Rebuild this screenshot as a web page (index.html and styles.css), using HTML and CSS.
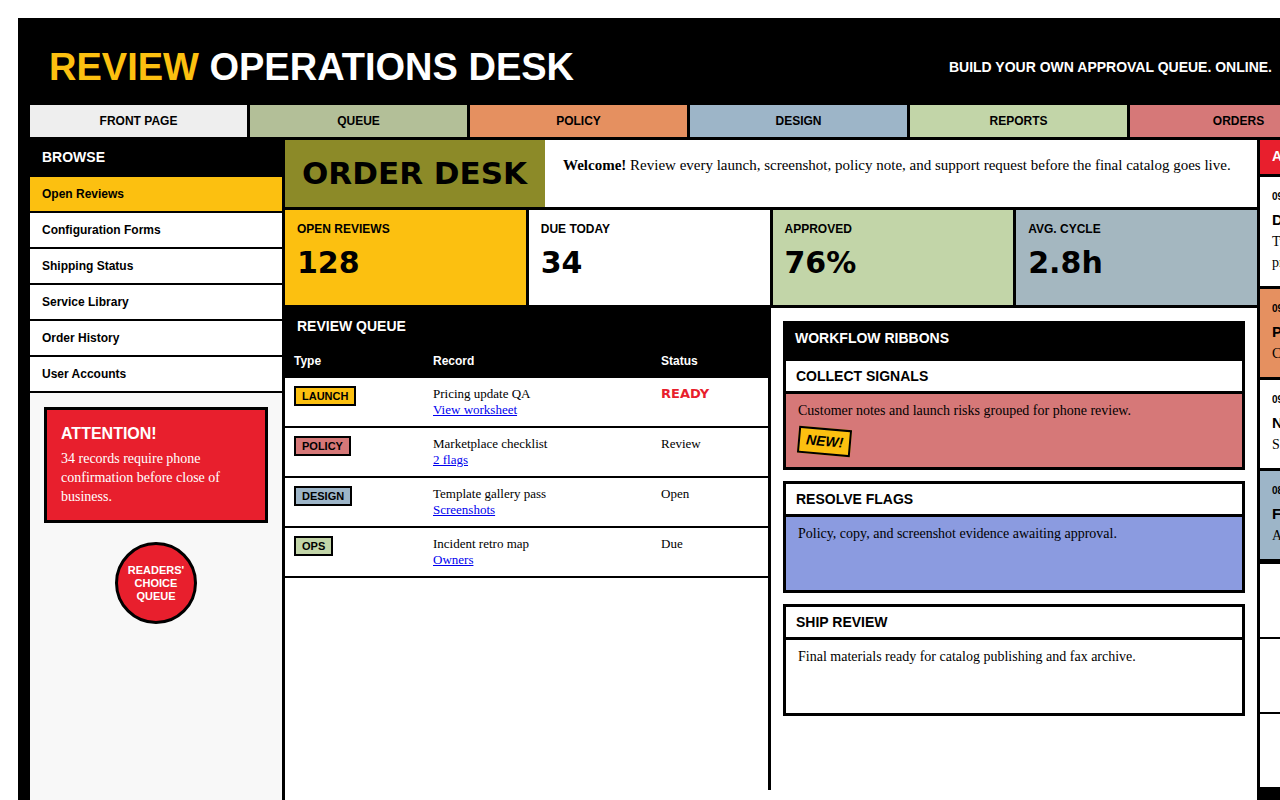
FILE: index.html
```html
<!DOCTYPE html>
<html lang="en">
<head>
    <meta charset="UTF-8">
    <meta name="viewport" content="width=device-width, initial-scale=1.0">
    <title>Review Operations Desk</title>
    <link rel="stylesheet" href="styles.css">
</head>
<body>

<div class="page">
    <header class="masthead">
        <h1 class="title"><span class="title-accent">REVIEW</span> OPERATIONS DESK</h1>
        <p class="tagline">BUILD YOUR OWN APPROVAL QUEUE. ONLINE.</p>
    </header>

    <nav class="tabs">
        <a href="#" class="tab tab-front">FRONT PAGE</a>
        <a href="#" class="tab tab-queue">QUEUE</a>
        <a href="#" class="tab tab-policy">POLICY</a>
        <a href="#" class="tab tab-design">DESIGN</a>
        <a href="#" class="tab tab-reports">REPORTS</a>
        <a href="#" class="tab tab-orders">ORDERS</a>
    </nav>

    <div class="layout">
        <aside class="sidebar">
            <h2 class="sidebar-title">BROWSE</h2>
            <ul class="browse-list">
                <li><a href="#" class="active">Open Reviews</a></li>
                <li><a href="#">Configuration Forms</a></li>
                <li><a href="#">Shipping Status</a></li>
                <li><a href="#">Service Library</a></li>
                <li><a href="#">Order History</a></li>
                <li><a href="#">User Accounts</a></li>
            </ul>
            <div class="sidebar-extra">
                <div class="attention">
                    <h3>ATTENTION!</h3>
                    <p>34 records require phone confirmation before close of business.</p>
                </div>
                <div class="badge">READERS'<br>CHOICE<br>QUEUE</div>
            </div>
        </aside>

        <main class="desk">
            <div class="desk-head">
                <h2 class="desk-title">ORDER DESK</h2>
                <p class="welcome"><strong>Welcome!</strong> Review every launch, screenshot, policy note, and support request before the final catalog goes live.</p>
            </div>

            <div class="stats">
                <div class="stat stat-yellow">
                    <div class="stat-label">OPEN REVIEWS</div>
                    <div class="stat-value">128</div>
                </div>
                <div class="stat">
                    <div class="stat-label">DUE TODAY</div>
                    <div class="stat-value">34</div>
                </div>
                <div class="stat stat-green">
                    <div class="stat-label">APPROVED</div>
                    <div class="stat-value">76%</div>
                </div>
                <div class="stat stat-slate">
                    <div class="stat-label">AVG. CYCLE</div>
                    <div class="stat-value">2.8h</div>
                </div>
            </div>

            <div class="lower">
                <section class="queue">
                    <h2 class="queue-title">REVIEW QUEUE</h2>
                    <table class="queue-table">
                        <colgroup>
                            <col class="col-type">
                            <col class="col-record">
                            <col class="col-status">
                        </colgroup>
                        <thead>
                            <tr>
                                <th>Type</th>
                                <th>Record</th>
                                <th>Status</th>
                            </tr>
                        </thead>
                        <tbody>
                            <tr>
                                <td><span class="tag tag-launch">LAUNCH</span></td>
                                <td>Pricing update QA<br><a href="#">View worksheet</a></td>
                                <td><span class="ready">READY</span></td>
                            </tr>
                            <tr>
                                <td><span class="tag tag-policy">POLICY</span></td>
                                <td>Marketplace checklist<br><a href="#">2 flags</a></td>
                                <td>Review</td>
                            </tr>
                            <tr>
                                <td><span class="tag tag-design">DESIGN</span></td>
                                <td>Template gallery pass<br><a href="#">Screenshots</a></td>
                                <td>Open</td>
                            </tr>
                            <tr>
                                <td><span class="tag tag-ops">OPS</span></td>
                                <td>Incident retro map<br><a href="#">Owners</a></td>
                                <td>Due</td>
                            </tr>
                        </tbody>
                    </table>
                </section>

                <section class="workflow">
                    <h2 class="workflow-title">WORKFLOW RIBBONS</h2>
                    <div class="ribbon">
                        <h3 class="ribbon-title">COLLECT SIGNALS</h3>
                        <div class="ribbon-body ribbon-pink">
                            <p>Customer notes and launch risks grouped for phone review.</p>
                            <span class="sticker">NEW!</span>
                        </div>
                    </div>
                    <div class="ribbon">
                        <h3 class="ribbon-title">RESOLVE FLAGS</h3>
                        <div class="ribbon-body ribbon-blue">
                            <p>Policy, copy, and screenshot evidence awaiting approval.</p>
                        </div>
                    </div>
                    <div class="ribbon">
                        <h3 class="ribbon-title">SHIP REVIEW</h3>
                        <div class="ribbon-body">
                            <p>Final materials ready for catalog publishing and fax archive.</p>
                        </div>
                    </div>
                </section>
            </div>
        </main>

        <aside class="rail">
            <h2 class="rail-title">ACTIVITY</h2>
            <div class="rail-list">
                <div class="rail-item">
                    <div class="rail-time">09:42</div>
                    <div class="rail-head">Design proof returned</div>
                    <p class="rail-text">Two hero banners need crops,<br>pricing copy still pending.</p>
                </div>
                <div class="rail-item rail-orange">
                    <div class="rail-time">09:18</div>
                    <div class="rail-head">Policy note added</div>
                    <p class="rail-text">Copy approved by legal.</p>
                </div>
                <div class="rail-item">
                    <div class="rail-time">09:05</div>
                    <div class="rail-head">New support request</div>
                    <p class="rail-text">Shipping question flagged.</p>
                </div>
                <div class="rail-item rail-blue">
                    <div class="rail-time">08:51</div>
                    <div class="rail-head">Fax archive synced</div>
                    <p class="rail-text">All pages stored.</p>
                </div>
            </div>
            <div class="rail-slot"></div>
            <div class="rail-slot"></div>
            <div class="rail-slot"></div>
        </aside>
    </div>
</div>

</body>
</html>
```

FILE: styles.css
```css
html, body {
    overflow: hidden;
}
body {
    margin: 0;
    padding: 18px 0 0 18px;
    background-color: #fff;
    font-family: "Liberation Sans", Arial, sans-serif;
    color: #000;
}
h1, h2, h3, p, ul {
    margin: 0;
    padding: 0;
}
.page {
    width: 1285px;
    background-color: #000;
}

/* masthead */
.masthead {
    display: flex;
    align-items: center;
    justify-content: space-between;
    padding: 30px 31px 19px;
}
.title {
    font-size: 38px;
    line-height: 38px;
    font-weight: bold;
    color: #fff;
}
.title-accent {
    color: #fcc010;
}
.tagline {
    font-size: 14px;
    line-height: 14px;
    font-weight: bold;
    color: #fff;
}

/* tabs */
.tabs {
    display: flex;
    gap: 3px;
    padding: 0 12px;
    margin-bottom: 3px;
}
.tab {
    flex: 0 0 217px;
    height: 32px;
    display: flex;
    align-items: center;
    justify-content: center;
    font-size: 12px;
    font-weight: bold;
    color: #000;
    text-decoration: none;
}
.tab-front { background-color: #eeeeee; }
.tab-queue { background-color: #b3bf98; }
.tab-policy { background-color: #e59060; }
.tab-design { background-color: #9db5c8; }
.tab-reports { background-color: #c2d5a8; }
.tab-orders { background-color: #d67878; }

/* layout */
.layout {
    display: grid;
    grid-template-columns: 252px 972px 240px;
    gap: 3px;
    padding-left: 12px;
    min-height: 680px;
}

/* sidebar */
.sidebar {
    display: flex;
    flex-direction: column;
}
.sidebar-title {
    padding: 9px 12px 11px;
    font-size: 14px;
    line-height: 17px;
    color: #fff;
}
.browse-list {
    list-style: none;
}
.browse-list a {
    display: block;
    padding: 10px 12px;
    font-size: 12px;
    line-height: 14px;
    font-weight: bold;
    color: #000;
    text-decoration: none;
    background-color: #fff;
    border-bottom: 2px solid #000;
}
.browse-list a.active {
    background-color: #fcc010;
}
.sidebar-extra {
    flex: 1;
    background-color: #f8f8f8;
    padding: 14px;
}
.attention {
    background-color: #e81f2d;
    border: 3px solid #000;
    padding: 14px;
    color: #fff;
}
.attention h3 {
    font-size: 16px;
    line-height: 19px;
}
.attention p {
    margin-top: 6px;
    font-family: "Liberation Serif", "Times New Roman", serif;
    font-size: 14px;
    line-height: 19px;
}
.badge {
    width: 82px;
    height: 82px;
    box-sizing: border-box;
    margin: 19px auto 0;
    border: 3px solid #000;
    border-radius: 50%;
    background-color: #e81f2d;
    color: #fff;
    display: flex;
    align-items: center;
    justify-content: center;
    text-align: center;
    font-size: 11px;
    line-height: 13px;
    font-weight: bold;
}

/* desk */
.desk {
    background-color: #fff;
    display: flex;
    flex-direction: column;
}
.desk-head {
    display: grid;
    grid-template-columns: 260px 1fr;
    height: 67px;
    border-bottom: 3px solid #000;
}
.desk-title {
    background-color: #8c8a28;
    display: flex;
    align-items: center;
    padding: 0 17px;
    font-family: "Arial Black", "DejaVu Sans", sans-serif;
    font-size: 31px;
    font-weight: bold;
    line-height: 1;
}
.welcome {
    padding: 16px 18px;
    font-family: "Liberation Serif", "Times New Roman", serif;
    font-size: 15px;
    line-height: 18px;
}
.stats {
    display: grid;
    grid-template-columns: repeat(4, 1fr);
    gap: 3px;
    background-color: #000;
    border-bottom: 3px solid #000;
}
.stat {
    height: 95px;
    box-sizing: border-box;
    padding: 12px 12px 0;
    background-color: #fff;
}
.stat-yellow { background-color: #fcc010; }
.stat-green { background-color: #c2d5a8; }
.stat-slate { background-color: #a4b7c0; }
.stat-label {
    font-size: 12px;
    line-height: 14px;
    font-weight: bold;
}
.stat-value {
    margin-top: 12px;
    font-family: "Arial Black", "DejaVu Sans", sans-serif;
    font-size: 30px;
    font-weight: bold;
    line-height: 1;
}

.lower {
    display: grid;
    grid-template-columns: 483px 1fr;
    gap: 3px;
    height: 482px;
    background-color: #000;
}

/* review queue */
.queue {
    background-color: #fff;
}
.queue-title {
    background-color: #000;
    color: #fff;
    padding: 10px 12px 9px;
    font-size: 14px;
    line-height: 17px;
}
.queue-table {
    width: 100%;
    border-collapse: collapse;
    table-layout: fixed;
}
.col-type { width: 139px; }
.col-record { width: 228px; }
.col-status { width: 116px; }
.queue-table th {
    background-color: #000;
    color: #fff;
    text-align: left;
    padding: 10px 9px;
    font-size: 12px;
    line-height: 14px;
}
.queue-table td {
    vertical-align: top;
    padding: 8px 9px;
    border-bottom: 2px solid #000;
    font-family: "Liberation Serif", "Times New Roman", serif;
    font-size: 13px;
    line-height: 16px;
}
.queue-table a {
    color: #0000ee;
}
.tag {
    display: inline-block;
    padding: 1px 6px;
    border: 2px solid #000;
    font-family: "Liberation Sans", Arial, sans-serif;
    font-size: 11px;
    line-height: 14px;
    font-weight: bold;
}
.tag-launch { background-color: #fcc010; }
.tag-policy { background-color: #d67878; }
.tag-design { background-color: #9db5c8; }
.tag-ops { background-color: #c2d5a8; }
.ready {
    font-family: "Arial Black", "DejaVu Sans", sans-serif;
    font-weight: bold;
    font-size: 13px;
    color: #e81f2d;
}

/* workflow ribbons */
.workflow {
    background-color: #fff;
    padding: 13px 12px 0;
}
.workflow-title {
    background-color: #000;
    color: #fff;
    padding: 9px 12px 11px;
    font-size: 14px;
    line-height: 17px;
}
.ribbon {
    border: 3px solid #000;
    margin-bottom: 11px;
}
.ribbon-title {
    padding: 6px 10px;
    font-size: 14px;
    line-height: 18px;
    border-bottom: 3px solid #000;
    background-color: #fff;
}
.ribbon-body {
    min-height: 73px;
    box-sizing: border-box;
    padding: 8px 12px;
    font-family: "Liberation Serif", "Times New Roman", serif;
    font-size: 14px;
    line-height: 18px;
}
.ribbon-pink { background-color: #d67878; }
.ribbon-blue { background-color: #8b9be0; }
.sticker {
    display: inline-block;
    margin-top: 8px;
    padding: 3px 6px;
    border: 2px solid #000;
    background-color: #fcc010;
    font-family: "Liberation Sans", Arial, sans-serif;
    font-size: 14px;
    line-height: 17px;
    font-weight: bold;
    font-style: italic;
    transform: rotate(5deg);
}

/* activity rail */
.rail {
    display: flex;
    flex-direction: column;
}
.rail-title {
    background-color: #e81f2d;
    color: #fff;
    padding: 8px 12px 9px;
    font-size: 14px;
    line-height: 17px;
    border-bottom: 3px solid #000;
}
.rail-list {
    display: flex;
    flex-direction: column;
    gap: 3px;
    border-bottom: 5px solid #000;
}
.rail-item {
    background-color: #fff;
    padding: 14px 12px 13px;
}
.rail-orange { background-color: #e59060; }
.rail-blue { background-color: #9db5c8; }
.rail-time {
    font-size: 10px;
    line-height: 12px;
    font-weight: bold;
}
.rail-head {
    margin-top: 8px;
    font-size: 15px;
    line-height: 18px;
    font-weight: bold;
}
.rail-text {
    margin-top: 2px;
    font-family: "Liberation Serif", "Times New Roman", serif;
    font-size: 14px;
    line-height: 21px;
}
.rail-slot {
    height: 73px;
    background-color: #fff;
    border-bottom: 2px solid #000;
}
```
